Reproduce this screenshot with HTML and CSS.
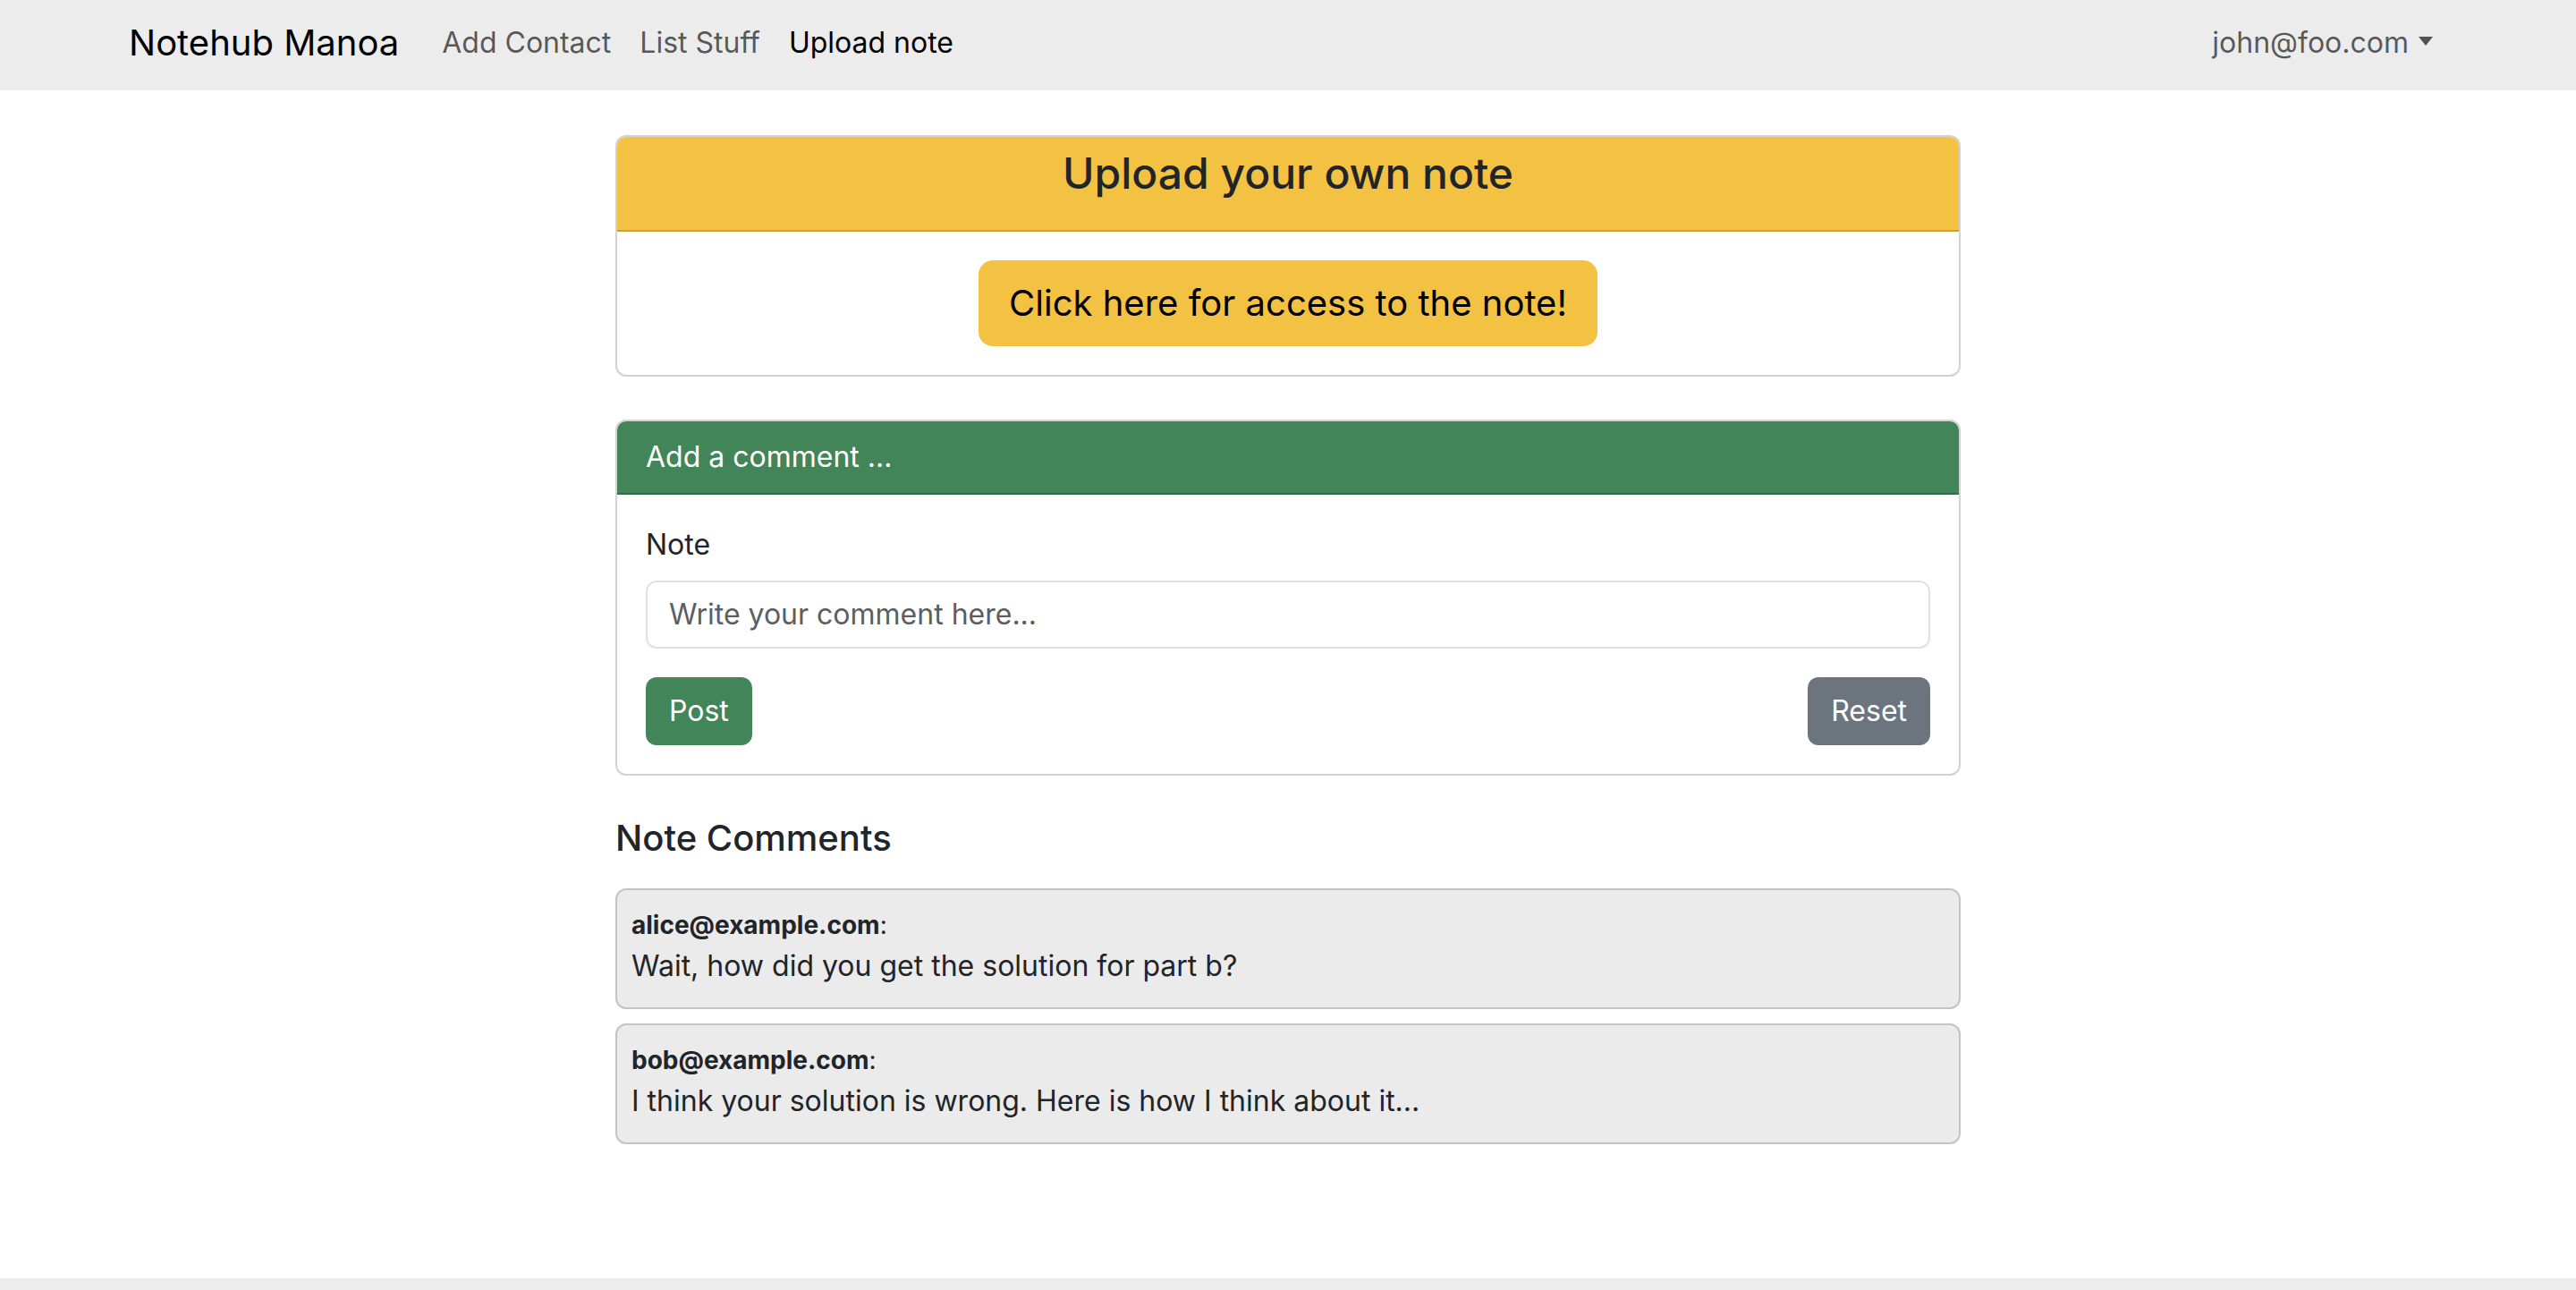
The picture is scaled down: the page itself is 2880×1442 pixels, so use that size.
FILE: index.html
```html
<!DOCTYPE html>
<html lang="en">
<head>
<meta charset="utf-8">
<title>Notehub Manoa</title>
<link rel="stylesheet" href="styles.css">
</head>
<body>
<nav class="navbar">
  <a class="brand" href="#">Notehub Manoa</a>
  <ul class="nav-links">
    <li><a class="nav-link" href="#">Add Contact</a></li>
    <li><a class="nav-link" href="#">List Stuff</a></li>
    <li><a class="nav-link active" href="#">Upload note</a></li>
  </ul>
  <div class="nav-user">
    <a class="nav-link dropdown" href="#">john@foo.com<span class="caret"></span></a>
  </div>
</nav>

<main class="main">
  <section class="card card-upload">
    <div class="card-header header-yellow">
      <h4 class="upload-title">Upload your own note</h4>
    </div>
    <div class="card-body center">
      <a class="btn btn-lg btn-yellow" href="#">Click here for access to the note!</a>
    </div>
  </section>

  <section class="card card-comment">
    <div class="card-header header-green">Add a comment ...</div>
    <form class="card-body">
      <label class="form-label" for="note">Note</label>
      <input class="form-control" id="note" type="text" placeholder="Write your comment here...">
      <div class="form-actions">
        <button class="btn btn-green" type="button">Post</button>
        <button class="btn btn-gray" type="reset">Reset</button>
      </div>
    </form>
  </section>

  <h5 class="comments-title">Note Comments</h5>
  <div class="comment">
    <div class="comment-author"><strong>alice@example.com</strong>:</div>
    <div class="comment-text">Wait, how did you get the solution for part b?</div>
  </div>
  <div class="comment">
    <div class="comment-author"><strong>bob@example.com</strong>:</div>
    <div class="comment-text">I think your solution is wrong. Here is how I think about it...</div>
  </div>
</main>

<footer class="footer"></footer>
</body>
</html>
```
FILE: styles.css
```css
* { box-sizing: border-box; }
html, body { margin: 0; padding: 0; }
body {
  font-family: Inter, "Noto Sans", sans-serif;
  font-size: 32px;
  line-height: 1.5;
  color: #212529;
  background: #ffffff;
}
a { text-decoration: none; }

/* Navbar */
.navbar {
  display: flex;
  align-items: center;
  height: 101px;
  padding: 0 144px 5px 144px;
  background: #ececec;
}
.brand {
  font-size: 40px;
  line-height: 60px;
  padding: 10px 0;
  margin-right: 32px;
  color: #000;
}
.nav-links {
  display: flex;
  list-style: none;
  margin: 0;
  padding: 0;
  flex: 1;
}
.nav-link {
  display: block;
  padding: 16px 16px;
  line-height: 48px;
  color: rgba(0, 0, 0, 0.65);
}
.nav-link.active { color: #000; }
.nav-user { display: flex; }
.dropdown { display: flex; align-items: center; }
.caret {
  display: inline-block;
  margin-left: 11px;
  width: 0;
  height: 0;
  border-top: 10px solid rgba(0, 0, 0, 0.65);
  border-left: 8px solid transparent;
  border-right: 8px solid transparent;
  margin-top: -4px;
}

/* Main column */
.main {
  width: 1504px;
  margin: 50px auto 0;
}

.card {
  border: 2px solid rgba(0, 0, 0, 0.175);
  border-radius: 12px;
  overflow: hidden;
  background: #fff;
}
.card-header {
  border-bottom: 2px solid rgba(0, 0, 0, 0.175);
}
.header-yellow {
  background: #f4c243;
  padding: 12px 32px 34px;
  text-align: center;
}
.upload-title {
  margin: 0;
  font-size: 48px;
  font-weight: 500;
  line-height: 1.2;
  color: #212529;
}
.header-green {
  background: #418558;
  color: #fff;
  padding: 16px 32px;
  line-height: 48px;
}
.card-body { padding: 32px; }
.center { display: flex; justify-content: center; }

.card-comment { margin-top: 48px; }

/* Buttons */
.btn {
  display: inline-block;
  font-family: inherit;
  font-size: 32px;
  line-height: 48px;
  padding: 12px 24px;
  border: 2px solid transparent;
  border-radius: 12px;
  cursor: pointer;
}
.btn-lg {
  font-size: 40px;
  line-height: 60px;
  padding: 16px 32px;
  border-radius: 16px;
}
.btn-yellow { background: #f4c243; color: #000; }
.btn-green { background: #418558; color: #fff; }
.btn-gray { background: #6c757d; color: #fff; }

/* Form */
.form-label {
  display: block;
  margin-bottom: 16px;
  color: #212529;
}
.form-control {
  display: block;
  width: 100%;
  font-family: inherit;
  font-size: 32px;
  line-height: 48px;
  padding: 12px 24px;
  border: 2px solid #dee2e6;
  border-radius: 12px;
  color: #212529;
  background: #fff;
}
.form-control::placeholder { color: #5b5e62; opacity: 1; }
.form-actions {
  display: flex;
  justify-content: space-between;
  margin-top: 32px;
}

/* Comments */
.comments-title {
  margin: 46px 0 32px;
  font-size: 40px;
  font-weight: 500;
  line-height: 1.2;
  color: #212529;
}
.comment {
  background: #ebebeb;
  border: 2px solid #c4c4c4;
  border-radius: 12px;
  padding: 17px 16px 22px;
  margin-bottom: 16px;
}
.comment-author {
  font-size: 28px;
  line-height: 44px;
}
.comment-author strong { font-weight: 700; }
.comment-text { line-height: 48px; }

.footer {
  margin-top: 150px;
  height: 120px;
  background: #ececec;
}
```
